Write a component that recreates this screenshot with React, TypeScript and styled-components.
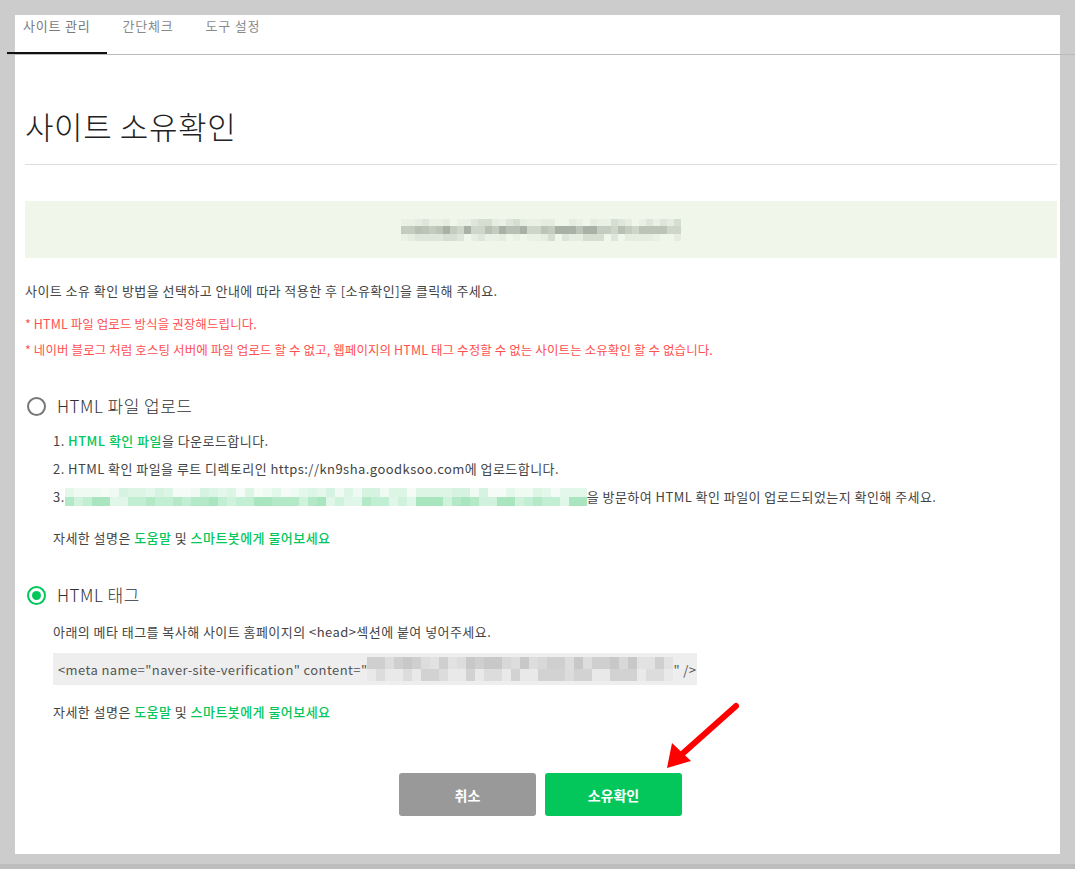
import React from "react";
import styled, { createGlobalStyle } from "styled-components";

const Global = createGlobalStyle`
  html, body { margin: 0; padding: 0; }
  body {
    background: #cccccc;
    font-family: "Noto Sans CJK KR", "Noto Sans", sans-serif;
    color: #444;
  }
  #root { width: 1075px; height: 869px; overflow: hidden; }
`;

const Page = styled.div`
  position: relative;
  width: 1075px;
  height: 869px;
  background: #cccccc;
  display: flex;
  flex-direction: column;
  padding-top: 15px;
  box-sizing: border-box;
`;

const Panel = styled.div`
  margin-left: 15px;
  width: 1045px;
  height: 839px;
  background: #ffffff;
  display: flex;
  flex-direction: column;
`;

const BottomBand = styled.div`
  margin-top: 10px;
  height: 5px;
  background: #bdbdbd;
`;

const TabBar = styled.div`
  display: flex;
  margin: 0 -15px 0 -8px;
  height: 40px;
  border-bottom: 1px solid #bbbbbb;
  box-sizing: border-box;
`;

const Tab = styled.div<{ $active?: boolean }>`
  padding: 2px 16px 0;
  font-size: 13px;
  line-height: 17px;
  letter-spacing: 0.8px;
  color: ${(p) => (p.$active ? "#7a7a7a" : "#8a8a8a")};
  border-bottom: 2px solid ${(p) => (p.$active ? "#111" : "transparent")};
  height: 39px;
  box-sizing: border-box;
  margin-bottom: -1px;
  white-space: nowrap;
`;

const Content = styled.div`
  padding: 0 3px 0 10px;
  display: flex;
  flex-direction: column;
`;

const Title = styled.h1`
  margin: 0;
  padding-top: 50px;
  padding-bottom: 17px;
  font-size: 31px;
  line-height: 42px;
  font-weight: 300;
  color: #222;
  letter-spacing: 0.6px;
  border-bottom: 1px solid #dddddd;
`;

const SiteBox = styled.div`
  margin-top: 36px;
  height: 57px;
  background: #f0f6e9;
  display: flex;
  align-items: center;
  justify-content: center;
`;

const Mosaic = styled.div<{ $cols: number; $cw: number }>`
  display: grid;
  grid-template-columns: repeat(${(p) => p.$cols}, ${(p) => p.$cw}px);
`;

const Cell = styled.div<{ $h: number }>`
  height: ${(p) => p.$h}px;
`;

const Guide = styled.p`
  margin: 24px 0 0;
  font-size: 13px;
  line-height: 18px;
  color: #444;
  letter-spacing: 0.45px;
`;

const Warn = styled.p<{ $first?: boolean }>`
  margin: ${(p) => (p.$first ? "15px" : "8px")} 0 0;
  font-size: 12.5px;
  line-height: 18px;
  color: #ff4f4f;
  letter-spacing: 0.1px;
`;

const OptionHead = styled.div<{ $top: number }>`
  margin-top: ${(p) => p.$top}px;
  display: flex;
  align-items: center;
  gap: 11px;
  padding-left: 2px;
  font-size: 17px;
  line-height: 24px;
  font-weight: 300;
  color: #333;
  letter-spacing: 0.5px;
`;

const Radio = styled.span<{ $checked?: boolean }>`
  width: 19px;
  height: 19px;
  border-radius: 50%;
  box-sizing: border-box;
  border: 2px solid ${(p) => (p.$checked ? "#03c75a" : "#777")};
  display: inline-flex;
  align-items: center;
  justify-content: center;
  flex: none;
  &::after {
    content: "";
    width: 9px;
    height: 9px;
    border-radius: 50%;
    background: ${(p) => (p.$checked ? "#03c75a" : "transparent")};
  }
`;

const Body = styled.div`
  padding-left: 28px;
  display: flex;
  flex-direction: column;
`;

const Line = styled.div<{ $top: number }>`
  margin-top: ${(p) => p.$top}px;
  font-size: 13px;
  line-height: 20px;
  color: #444;
  letter-spacing: 0.45px;
  display: flex;
  align-items: center;
  white-space: nowrap;
`;

const Link = styled.span`
  color: #03c75a;
  font-weight: 500;
`;

const CodeBox = styled.div`
  margin-top: 11px;
  width: 644px;
  height: 32px;
  background: #eeeeee;
  display: flex;
  align-items: center;
  padding-left: 5px;
  box-sizing: border-box;
  font-size: 13px;
  color: #555;
  letter-spacing: 0.4px;
  white-space: nowrap;
`;

const Buttons = styled.div`
  margin-top: 51px;
  display: flex;
  justify-content: center;
  gap: 9px;
  padding-right: 1px;
`;

const Button = styled.button<{ $primary?: boolean }>`
  width: 137px;
  height: 43px;
  border: none;
  border-radius: 3px;
  background: ${(p) => (p.$primary ? "#03c75a" : "#999999")};
  color: #fff;
  font-family: "Noto Sans CJK KR", sans-serif;
  font-size: 14px;
  font-weight: 700;
  cursor: pointer;
`;

const Arrow = styled.svg`
  position: absolute;
  left: 655px;
  top: 695px;
`;

function rand(seed: number) {
  let s = seed;
  return () => {
    s = (s * 9301 + 49297) % 233280;
    return s / 233280;
  };
}

function Pixels({
  cols,
  rows,
  cw,
  palettes,
  seed,
}: {
  cols: number;
  rows: number[];
  cw: number;
  palettes: string[][];
  seed: number;
}) {
  const r = rand(seed);
  const cells: React.ReactNode[] = [];
  rows.forEach((h, ri) => {
    const pal = palettes[ri % palettes.length];
    for (let c = 0; c < cols; c++) {
      const color = pal[Math.floor(r() * pal.length)];
      cells.push(<Cell key={`${ri}-${c}`} $h={h} style={{ background: color }} />);
    }
  });
  return (
    <Mosaic $cols={cols} $cw={cw}>
      {cells}
    </Mosaic>
  );
}

const grayLight = ["#e6ece0", "#dfe5da", "#eaf0e4", "#d6ddd1", "#f0f6e9"];
const grayDark = ["#b8c0b4", "#c4cbbf", "#a9b1a6", "#ced5c9", "#bcc3b7"];
const greenLight = ["#e3f7ea", "#eefaf2", "#d6f3e1", "#f5fcf8", "#dcf5e5"];
const greenDark = ["#c2eed3", "#b3e9c7", "#d0f2dd", "#a9e6bf", "#e0f6e8"];
const codeGray = ["#d8d8d8", "#cfcfcf", "#e2e2e2", "#c8c8c8", "#dddddd"];

export default function App() {
  return (
    <>
      <Global />
      <Page>
        <Panel>
          <TabBar>
            <Tab $active>사이트 관리</Tab>
            <Tab>간단체크</Tab>
            <Tab>도구 설정</Tab>
          </TabBar>
          <Content>
            <Title>사이트 소유확인</Title>
            <SiteBox>
              <Pixels cols={40} cw={7} rows={[7, 8, 7]} palettes={[grayLight, grayDark, grayLight]} seed={7} />
            </SiteBox>
            <Guide>사이트 소유 확인 방법을 선택하고 안내에 따라 적용한 후 [소유확인]을 클릭해 주세요.</Guide>
            <Warn $first>* HTML 파일 업로드 방식을 권장해드립니다.</Warn>
            <Warn>* 네이버 블로그 처럼 호스팅 서버에 파일 업로드 할 수 없고, 웹페이지의 HTML 태그 수정할 수 없는 사이트는 소유확인 할 수 없습니다.</Warn>

            <OptionHead $top={35}>
              <Radio />
              HTML 파일 업로드
            </OptionHead>
            <Body>
              <Line $top={13}>
                1.&nbsp;<Link>HTML 확인 파일</Link>을 다운로드합니다.
              </Line>
              <Line $top={8}>2. HTML 확인 파일을 루트 디렉토리인 https://kn9sha.goodksoo.com에 업로드합니다.</Line>
              <Line $top={8}>
                3.
                <Pixels cols={58} cw={9} rows={[9, 9]} palettes={[greenLight, greenDark]} seed={21} />
                을 방문하여 HTML 확인 파일이 업로드되었는지 확인해 주세요.
              </Line>
              <Line $top={21}>
                자세한 설명은&nbsp;<Link>도움말</Link>&nbsp;및&nbsp;<Link>스마트봇에게 물어보세요</Link>
              </Line>
            </Body>

            <OptionHead $top={35}>
              <Radio $checked />
              HTML 태그
            </OptionHead>
            <Body>
              <Line $top={15}>아래의 메타 태그를 복사해 사이트 홈페이지의 &lt;head&gt;섹션에 붙여 넣어주세요.</Line>
              <CodeBox>
                &lt;meta name="naver-site-verification" content="
                <Pixels cols={34} cw={9} rows={[12, 12]} palettes={[codeGray, ["#e9e9e9", "#dcdcdc", "#d2d2d2"]]} seed={3} />
                " /&gt;
              </CodeBox>
              <Line $top={17}>
                자세한 설명은&nbsp;<Link>도움말</Link>&nbsp;및&nbsp;<Link>스마트봇에게 물어보세요</Link>
              </Line>
            </Body>

            <Buttons>
              <Button>취소</Button>
              <Button $primary>소유확인</Button>
            </Buttons>
          </Content>
        </Panel>
        <BottomBand />
        <Arrow width="90" height="80" viewBox="0 0 90 80">
          <line x1="81" y1="11" x2="26" y2="60" stroke="#ff0000" strokeWidth="6" strokeLinecap="round" />
          <polygon points="12,73 17,48 36,66" fill="#ff0000" />
        </Arrow>
      </Page>
    </>
  );
}
